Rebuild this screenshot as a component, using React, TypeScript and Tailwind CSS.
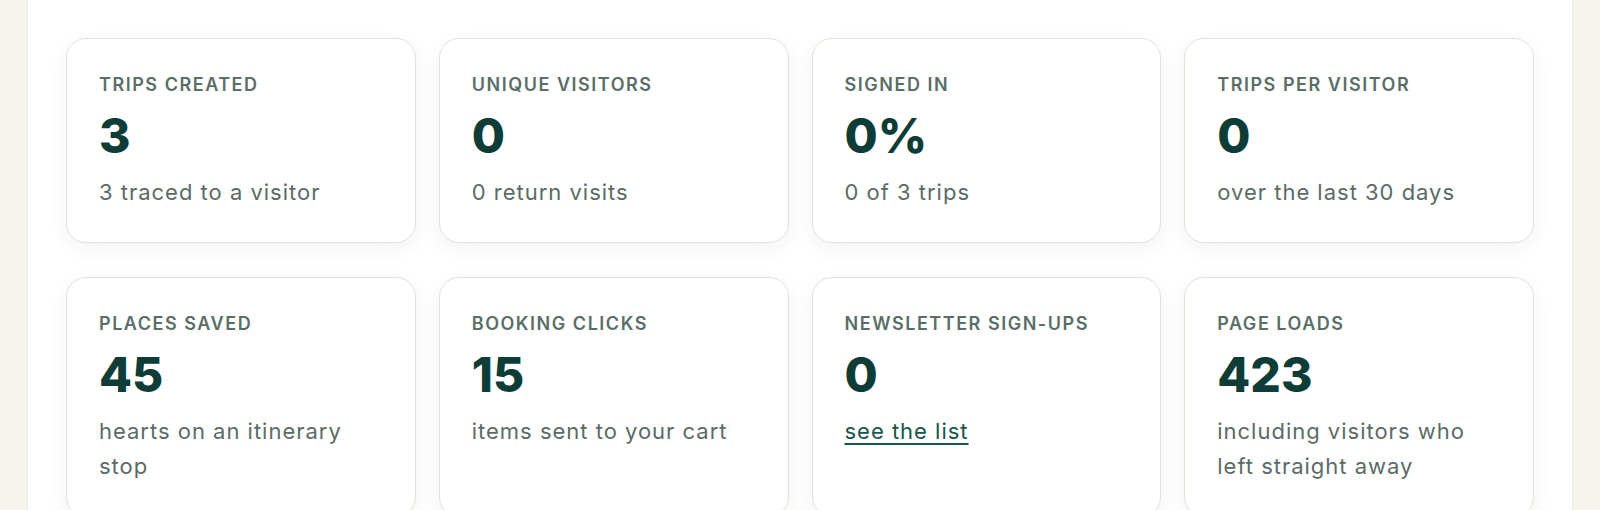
import React from "react";

type Stat = { label: string; value: string; sub: string; link?: boolean };

const stats: Stat[] = [
  { label: "Trips created", value: "3", sub: "3 traced to a visitor" },
  { label: "Unique visitors", value: "0", sub: "0 return visits" },
  { label: "Signed in", value: "0%", sub: "0 of 3 trips" },
  { label: "Trips per visitor", value: "0", sub: "over the last 30 days" },
  { label: "Places saved", value: "45", sub: "hearts on an itinerary stop" },
  { label: "Booking clicks", value: "15", sub: "items sent to your cart" },
  { label: "Newsletter sign-ups", value: "0", sub: "see the list", link: true },
  { label: "Page loads", value: "423", sub: "including visitors who left straight away" },
];

function Card({ s }: { s: Stat }) {
  return (
    <div className="rounded-[20px] border border-[#e6e1d4] bg-white pl-[32px] pr-[40px] pt-[34px] pb-[32px] shadow-[0_6px_20px_rgba(30,40,30,0.06)]">
      <div className="text-[18px] font-semibold uppercase leading-[24px] tracking-[0.085em] text-[#5a6e68]">
        {s.label}
      </div>
      <div className="mt-[15px] text-[48px] font-extrabold leading-[48px] text-[#0e3c37]">
        {s.value}
      </div>
      <div className="mt-[15px] text-[22px] leading-[35px] tracking-[0.045em] text-[#5a6b66]">
        {s.link ? (
          <a href="#" className="text-[#16564c] underline underline-offset-[4px] decoration-[1.5px]">
            {s.sub}
          </a>
        ) : (
          s.sub
        )}
      </div>
    </div>
  );
}

export default function App() {
  return (
    <div
      className="h-[510px] overflow-hidden bg-[#f4f3ee] px-[27px]"
      style={{ fontFamily: "Inter, 'Noto Sans', sans-serif" }}
    >
      <div className="h-full border-x border-[#ebe9e1] bg-white px-[38px] pt-[38px]">
        <div className="grid grid-cols-4 gap-x-[23px] gap-y-[34px]">
          {stats.map((s) => (
            <Card key={s.label} s={s} />
          ))}
        </div>
      </div>
    </div>
  );
}
